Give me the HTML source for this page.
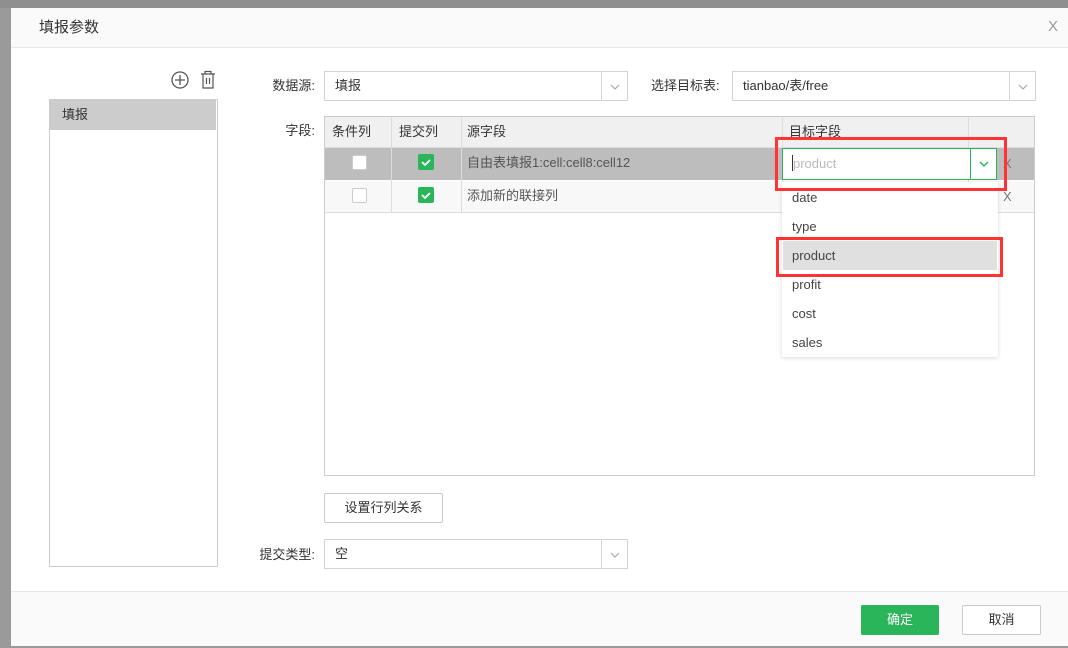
<!DOCTYPE html>
<html><head><meta charset="utf-8"><style>
*{box-sizing:border-box;margin:0;padding:0}
body{width:1068px;height:648px;overflow:hidden;background:#9a9a9a;font-family:"Liberation Sans","Noto Sans CJK SC",sans-serif;font-size:13px;line-height:16px;color:#333;position:relative}
.a{position:absolute}
.dlg{left:11px;top:8px;width:1057px;height:638px;background:#fff}
.sel{border:1px solid #d4d4d4;background:#fff;height:30px}
.sel span{position:absolute;left:10px;top:6px}
.sel i{position:absolute;right:0;top:0;width:26px;height:28px;border-left:1px solid #d4d4d4}
.lbl{text-align:right;width:80px;color:#333}
.cb{width:15px;height:15px;border:1px solid #ccc;background:#fff;border-radius:2px}
.cbg{width:16px;height:16px;background:#2bb55a;border-radius:2px}
.it{left:783px;width:214px;height:29px;padding:7px 0 0 9px;color:#444}
.red{border:3px solid #f33}
</style></head><body>
<div class="a" style="left:0;top:0;width:1068px;height:8px;background:#8f8f8f"></div>
<div class="a dlg"></div>
<div class="a" style="left:11px;top:8px;width:1057px;height:40px;background:#fafafa;border-bottom:1px solid #e8e8e8"></div>
<div class="a" style="left:39px;top:19px;font-size:15px;line-height:18px;color:#333">填报参数</div>
<div class="a" style="left:1048px;top:19px;font-size:15px;color:#999">X</div>
<svg class="a" style="left:171px;top:71px" width="18" height="18"><circle cx="9" cy="9" r="8" fill="none" stroke="#555" stroke-width="1.3"/><path d="M9 4v10M4 9h10" stroke="#555" stroke-width="1.3"/></svg>
<svg class="a" style="left:200px;top:70px" width="16" height="19"><path d="M1 4h14M5 4V1.5h6V4M3 4v14h10V4M6.5 8v6M9.5 8v6" fill="none" stroke="#555" stroke-width="1.2"/></svg>
<div class="a" style="left:49px;top:99px;width:169px;height:468px;border:1px solid #ccc"></div>
<div class="a" style="left:50px;top:100px;width:166px;height:30px;background:#ccc;padding:7px 0 0 12px">填报</div>
<div class="a lbl" style="left:235px;top:78px">数据源:</div>
<div class="a sel" style="left:324px;top:71px;width:304px"><span>填报</span><i><svg width="26" height="28"><path d="M9 13l4 4 4-4" fill="none" stroke="#aaa" stroke-width="1.2"/></svg></i></div>
<div class="a" style="left:651px;top:78px">选择目标表:</div>
<div class="a sel" style="left:732px;top:71px;width:304px"><span>tianbao/表/free</span><i><svg width="26" height="28"><path d="M9 13l4 4 4-4" fill="none" stroke="#aaa" stroke-width="1.2"/></svg></i></div>
<div class="a lbl" style="left:235px;top:123px">字段:</div>
<div class="a" style="left:324px;top:116px;width:711px;height:360px;border:1px solid #ccc;background:#fff"></div>
<div class="a" style="left:325px;top:117px;width:709px;height:31px;background:#f0f0f0;border-bottom:1px solid #ddd"></div>
<div class="a" style="left:325px;top:148px;width:709px;height:32px;background:#bdbdbd"></div>
<div class="a" style="left:325px;top:181px;width:709px;height:32px;background:#f8f8f8;border-bottom:1px solid #ddd"></div>
<div class="a" style="left:391px;top:117px;width:1px;height:96px;background:#ddd"></div>
<div class="a" style="left:461px;top:117px;width:1px;height:96px;background:#ddd"></div>
<div class="a" style="left:782px;top:117px;width:1px;height:96px;background:#ddd"></div>
<div class="a" style="left:968px;top:117px;width:1px;height:96px;background:#ddd"></div>
<div class="a" style="left:332px;top:124px">条件列</div>
<div class="a" style="left:399px;top:124px">提交列</div>
<div class="a" style="left:467px;top:124px">源字段</div>
<div class="a" style="left:789px;top:124px">目标字段</div>
<div class="a cb" style="left:352px;top:155px"></div>
<div class="a cb" style="left:352px;top:188px"></div>
<div class="a cbg" style="left:418px;top:154px"><svg width="16" height="16"><path d="M4 8l3 3 5-5" fill="none" stroke="#fff" stroke-width="1.8"/></svg></div>
<div class="a cbg" style="left:418px;top:187px"><svg width="16" height="16"><path d="M4 8l3 3 5-5" fill="none" stroke="#fff" stroke-width="1.8"/></svg></div>
<div class="a" style="left:467px;top:155px;color:#555">自由表填报1:cell:cell8:cell12</div>
<div class="a" style="left:467px;top:188px;color:#555">添加新的联接列</div>
<div class="a" style="left:1003px;top:156px;color:#777">X</div>
<div class="a" style="left:1003px;top:189px;color:#777">X</div>
<div class="a" style="left:782px;top:148px;width:215px;height:32px;border:1px solid #2bb55a;background:#fff"></div>
<div class="a" style="left:970px;top:148px;width:1px;height:32px;background:#2bb55a"></div>
<svg class="a" style="left:971px;top:148px" width="26" height="32"><path d="M9 14l4 4 4-4" fill="none" stroke="#2bb55a" stroke-width="1.4"/></svg>
<div class="a" style="left:792px;top:155px;width:1px;height:16px;background:#333"></div>
<div class="a" style="left:793px;top:156px;color:#bbb">product</div>
<div class="a" style="left:782px;top:182px;width:216px;height:175px;background:#fff;box-shadow:0 1px 4px rgba(0,0,0,.15)"></div>
<div class="a it" style="top:183px">date</div>
<div class="a it" style="top:212px">type</div>
<div class="a it" style="top:241px;background:#e0e0e0">product</div>
<div class="a it" style="top:270px">profit</div>
<div class="a it" style="top:299px">cost</div>
<div class="a it" style="top:328px">sales</div>
<div class="a red" style="left:775px;top:137px;width:232px;height:54px"></div>
<div class="a red" style="left:776px;top:237px;width:227px;height:40px"></div>
<div class="a" style="left:324px;top:493px;width:119px;height:30px;border:1px solid #ccc;border-radius:2px;text-align:center;padding-top:6px">设置行列关系</div>
<div class="a lbl" style="left:235px;top:547px">提交类型:</div>
<div class="a sel" style="left:324px;top:539px;width:304px"><span>空</span><i><svg width="26" height="28"><path d="M9 13l4 4 4-4" fill="none" stroke="#aaa" stroke-width="1.2"/></svg></i></div>
<div class="a" style="left:11px;top:591px;width:1057px;height:55px;background:#fafafa;border-top:1px solid #e8e8e8"></div>
<div class="a" style="left:861px;top:605px;width:78px;height:30px;background:#2bb55a;border-radius:2px;color:#fff;text-align:center;padding-top:7px">确定</div>
<div class="a" style="left:962px;top:605px;width:79px;height:30px;background:#fff;border:1px solid #ccc;border-radius:2px;text-align:center;padding-top:6px">取消</div>
<div class="a" style="left:0;top:646px;width:1068px;height:2px;background:#999"></div>
</body></html>
